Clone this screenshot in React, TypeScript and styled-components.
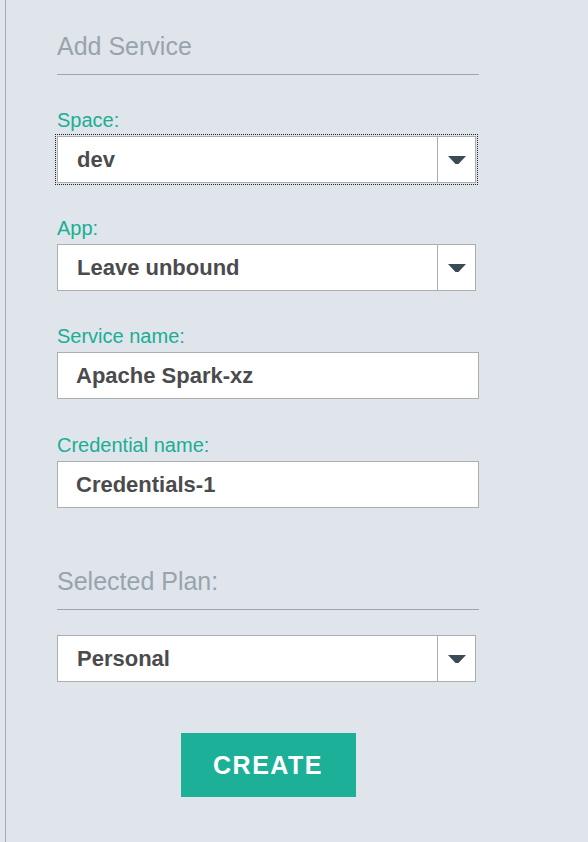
import * as React from "react";
import styled, { createGlobalStyle } from "styled-components";

const GlobalStyle = createGlobalStyle`
  html, body {
    margin: 0;
    padding: 0;
    background: #dfe5eb;
  }
  body {
    font-family: "Liberation Sans", Arial, Helvetica, sans-serif;
  }
`;

const Panel = styled.div`
  box-sizing: border-box;
  min-height: 842px;
  margin-left: 5px;
  border-left: 1px solid #a3acb2;
  padding: 31px 0 0 51px;
`;

const Form = styled.div`
  width: 422px;
  display: flex;
  flex-direction: column;
`;

const Heading = styled.h2<{ $top: number }>`
  margin: ${(p) => p.$top}px 0 0;
  padding-bottom: 13px;
  border-bottom: 1px solid #9ba5ab;
  font-size: 25px;
  line-height: 30px;
  font-weight: normal;
  color: #98a4ab;
`;

const Field = styled.div<{ $gap?: number }>`
  margin-top: ${(p) => p.$gap ?? 34}px;
  display: flex;
  flex-direction: column;
`;

const Label = styled.label`
  font-size: 20px;
  line-height: 22px;
  color: #1aae95;
  margin-bottom: 5px;
`;

const SelectBox = styled.div<{ $focused?: boolean }>`
  box-sizing: border-box;
  width: 419px;
  height: 47px;
  display: flex;
  background: #fff;
  border: 1px solid #aaaeb1;
  outline: ${(p) => (p.$focused ? "1px dotted #222" : "none")};
  outline-offset: 1px;
`;

const Value = styled.div`
  flex: 1;
  display: flex;
  align-items: center;
  padding-left: 19px;
  font-size: 22px;
  font-weight: bold;
  color: #4b4b4d;
`;

const ArrowCell = styled.div`
  width: 37px;
  border-left: 1px solid #aaaeb1;
  display: flex;
  align-items: center;
  justify-content: center;
`;

const TextInput = styled.input`
  box-sizing: border-box;
  width: 422px;
  height: 47px;
  margin: 0;
  padding: 0 0 0 18px;
  background: #fff;
  border: 1px solid #aaaeb1;
  border-radius: 0;
  font-family: inherit;
  font-size: 22px;
  font-weight: bold;
  color: #4b4b4d;
  outline: none;
`;

const PlanSelect = styled.div`
  margin-top: 25px;
`;

const ButtonRow = styled.div`
  margin-top: 51px;
  display: flex;
  justify-content: center;
`;

const CreateButton = styled.button`
  width: 175px;
  height: 64px;
  border: none;
  background: #1cb098;
  color: #fff;
  font-family: inherit;
  font-size: 25px;
  font-weight: bold;
  letter-spacing: 1.5px;
  cursor: pointer;
`;

const Caret = () => (
  <svg width="18" height="8" viewBox="0 0 18 8">
    <path d="M0 0 H18 L10.5 8 H7.5 Z" fill="#3c4a54" />
  </svg>
);

const Select = ({ value, focused }: { value: string; focused?: boolean }) => (
  <SelectBox $focused={focused}>
    <Value>{value}</Value>
    <ArrowCell>
      <Caret />
    </ArrowCell>
  </SelectBox>
);

export default function App() {
  return (
    <>
      <GlobalStyle />
      <Panel>
        <Form>
          <Heading $top={0}>Add Service</Heading>

          <Field>
            <Label>Space:</Label>
            <Select value="dev" focused />
          </Field>

          <Field>
            <Label>App:</Label>
            <Select value="Leave unbound" />
          </Field>

          <Field>
            <Label>Service name:</Label>
            <TextInput readOnly value="Apache Spark-xz" />
          </Field>

          <Field $gap={35}>
            <Label>Credential name:</Label>
            <TextInput readOnly value="Credentials-1" />
          </Field>

          <Heading $top={58}>Selected Plan:</Heading>

          <PlanSelect>
            <Select value="Personal" />
          </PlanSelect>

          <ButtonRow>
            <CreateButton>CREATE</CreateButton>
          </ButtonRow>
        </Form>
      </Panel>
    </>
  );
}
